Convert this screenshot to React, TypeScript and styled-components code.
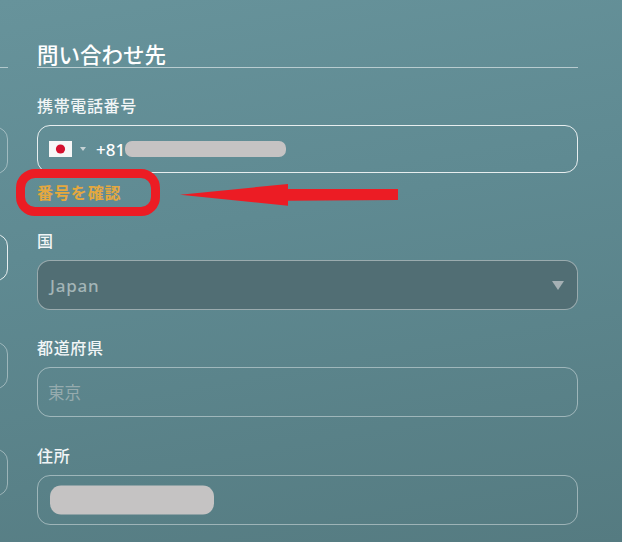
import React from "react";
import styled, { createGlobalStyle } from "styled-components";

const Global = createGlobalStyle`
  html, body {
    margin: 0;
    padding: 0;
  }
  body {
    font-family: "Noto Sans CJK JP", "Noto Sans", sans-serif;
  }
`;

const Page = styled.div`
  display: flex;
  width: 622px;
  height: 542px;
  overflow: hidden;
  background: linear-gradient(170deg, #67939b 0%, #5f8a92 40%, #557b81 100%);
`;

// 左のカラムは端だけ見えている
const LeftColumn = styled.div`
  flex: none;
  width: 8px;
  overflow: hidden;
  padding-top: 67px;
  display: flex;
  flex-direction: column;
  align-items: flex-end;
`;

const LeftRule = styled.div`
  flex: none;
  width: 8px;
  height: 1px;
  margin-bottom: 59px;
  background: rgba(255, 255, 255, 0.5);
`;

const LeftInput = styled.div<{ $gap: number; $light?: boolean }>`
  flex: none;
  width: 60px;
  height: 47px;
  margin-bottom: ${(p) => p.$gap}px;
  box-sizing: border-box;
  border-radius: 12px;
  border: 1px solid ${(p) => (p.$light ? "rgba(255,255,255,0.85)" : "rgba(255,255,255,0.4)")};
`;

const Main = styled.div`
  position: relative;
  flex: none;
  width: 541px;
  margin-left: 29px;
  padding-top: 40px;
`;

const Title = styled.h2`
  margin: 0 0 26px;
  height: 27px;
  font-size: 21.5px;
  line-height: 27px;
  font-weight: 500;
  color: #fff;
  border-bottom: 1px solid rgba(255, 255, 255, 0.55);
`;

const Label = styled.div`
  height: 24px;
  margin-bottom: 7px;
  font-size: 16px;
  letter-spacing: 0.65px;
  line-height: 22px;
  font-weight: 500;
  color: #f1f5f6;
`;

const Field = styled.div<{ $light?: boolean; $dark?: boolean; $height?: number }>`
  position: relative;
  display: flex;
  align-items: center;
  box-sizing: border-box;
  height: ${(p) => p.$height ?? 50}px;
  padding: 0 11px;
  border-radius: 13px;
  border: 1px solid ${(p) => (p.$light ? "rgba(255,255,255,0.85)" : "rgba(255,255,255,0.42)")};
  background: ${(p) => (p.$dark ? "#516e74" : "transparent")};
`;

const Flag = styled.svg`
  flex: none;
  width: 23px;
  height: 16px;
`;

const FlagCaret = styled.span`
  flex: none;
  width: 0;
  height: 0;
  margin: 0 10px 0 8px;
  border-left: 3.5px solid transparent;
  border-right: 3.5px solid transparent;
  border-top: 4px solid #c6d2d5;
`;

const Phone = styled.span`
  color: #fff;
  font-family: "Noto Sans", sans-serif;
  font-size: 17px;
  font-weight: 500;
`;

const Mask = styled.div<{ $left: number; $width: number; $height: number; $radius: number }>`
  position: absolute;
  top: 50%;
  left: ${(p) => p.$left}px;
  width: ${(p) => p.$width}px;
  height: ${(p) => p.$height}px;
  transform: translateY(-50%);
  border-radius: ${(p) => p.$radius}px;
  background: #c5c3c3;
`;

const VerifyRow = styled.div`
  box-sizing: border-box;
  height: 40px;
  padding-bottom: 2px;
  display: flex;
  align-items: center;
  margin-bottom: 16px;
`;

const VerifyLink = styled.a`
  font-size: 16px;
  letter-spacing: 0.9px;
  font-weight: 700;
  color: #e5a83f;
`;

const Gap = styled.div<{ $size: number }>`
  height: ${(p) => p.$size}px;
`;

const SelectValue = styled.span`
  flex: 1;
  margin-left: 1px;
  color: #a3b5b7;
  font-family: "Noto Sans", sans-serif;
  font-size: 17px;
  font-weight: 500;
  letter-spacing: 0.8px;
`;

const Placeholder = styled.span`
  margin-left: -1px;
  color: #96abae;
  font-size: 16.5px;
`;

const SelectCaret = styled.span`
  flex: none;
  width: 0;
  height: 0;
  margin-right: 2px;
  border-left: 6px solid transparent;
  border-right: 6px solid transparent;
  border-top: 9px solid #a5b0b4;
`;

// 赤い注釈（スクリーンショットの上に描かれたもの）
const RedBox = styled.div`
  position: absolute;
  left: -21px;
  top: 169px;
  width: 144px;
  height: 47px;
  box-sizing: border-box;
  border: 9px solid #ec1c24;
  border-radius: 19px;
`;

const Arrow = styled.svg`
  position: absolute;
  left: 143px;
  top: 180px;
  width: 220px;
  height: 30px;
`;

function App() {
  return (
    <Page>
      <Global />
      <LeftColumn>
        <LeftRule />
        <LeftInput $gap={60} />
        <LeftInput $gap={61} $light />
        <LeftInput $gap={60} />
        <LeftInput $gap={0} />
      </LeftColumn>
      <Main>
        <Title>問い合わせ先</Title>
        <Label>携帯電話番号</Label>
        <Field $light $height={48}>
          <Flag viewBox="0 0 23 16">
            <rect width="23" height="16" fill="#f7f7f7" />
            <circle cx="11.5" cy="8" r="4.6" fill="#d5112e" />
          </Flag>
          <FlagCaret />
          <Phone>+81</Phone>
          <Mask $left={87} $width={161} $height={16} $radius={7} />
        </Field>
        <VerifyRow>
          <VerifyLink>番号を確認</VerifyLink>
        </VerifyRow>
        <Label>国</Label>
        <Field $dark>
          <SelectValue>Japan</SelectValue>
          <SelectCaret />
        </Field>
        <Gap $size={26} />
        <Label>都道府県</Label>
        <Field>
          <Placeholder>東京</Placeholder>
        </Field>
        <Gap $size={27} />
        <Label>住所</Label>
        <Field>
          <Mask $left={12} $width={164} $height={29} $radius={11} />
        </Field>
        <RedBox />
        <Arrow viewBox="0 0 220 30">
          <path d="M0 14.7 L108 4 L108 9 L218 9 L218 20 L108 20.7 L108 25.7 Z" fill="#ec1c24" />
        </Arrow>
      </Main>
    </Page>
  );
}

export default App;
